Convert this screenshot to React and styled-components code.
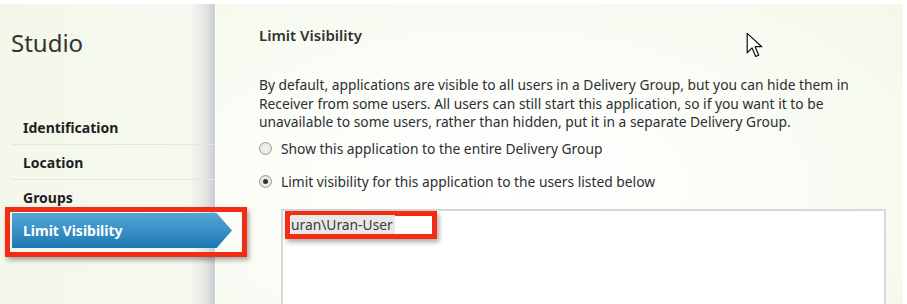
import React from "react";
import styled, { createGlobalStyle } from "styled-components";

const GlobalStyle = createGlobalStyle`
  html, body {
    margin: 0;
    padding: 0;
    width: 907px;
    height: 304px;
    overflow: hidden;
    background: #ffffff;
  }
  * {
    box-sizing: border-box;
  }
`;

const Screen = styled.div`
  position: relative;
  display: grid;
  grid-template-columns: 216px 1fr;
  width: 903px;
  height: 300px;
  margin-top: 4px;
  font-family: "Noto Sans", "Open Sans", sans-serif;
  color: #333333;
  background: radial-gradient(
    ellipse 60% 90% at 55% 60%,
    #ffffff 0%,
    #fbfdf7 45%,
    #f3f8ea 100%
  );
  overflow: hidden;
`;

const Sidebar = styled.div`
  position: relative;
  z-index: 2;
  padding-top: 22px;
  background: linear-gradient(90deg, #f3f8ea 0%, #f6f9f0 88%, #e4e7e4 95%, #c9ced1 100%);
  border-right: 1px solid #ffffff;
`;

const Title = styled.h1`
  margin: 0 0 50px 11px;
  font-size: 24px;
  font-weight: 400;
  color: #333333;
  line-height: 34px;
`;

const NavList = styled.ul`
  list-style: none;
  margin: 0;
  padding: 0;
`;

const NavItem = styled.li`
  height: 35px;
  margin-left: 11px;
  padding-left: 12px;
  display: flex;
  align-items: center;
  font-size: 14px;
  font-weight: 700;
  color: #1e1e24;
  border-bottom: 1px solid ${(p) => (p.$last ? "transparent" : "#e3e7df")};
`;

const Callout = styled.div`
  margin: -8px 0 0 5px;
  width: 242px;
  padding: 1px 10px 4px 2px;
  border: 5px solid #f42c14;
  box-shadow: 2px 3px 5px rgba(0, 0, 0, 0.35);
  background: transparent;
`;

const ActiveTab = styled.div`
  height: 35px;
  width: 220px;
  padding-left: 11px;
  display: flex;
  align-items: center;
  font-size: 14px;
  font-weight: 700;
  color: #ffffff;
  background: linear-gradient(180deg, #52a6d6 0%, #3b93c8 45%, #1c78b2 100%);
  clip-path: polygon(0 0, 93% 0, 100% 50%, 93% 100%, 0 100%);
`;

const Main = styled.div`
  position: relative;
  padding: 21px 0 0 43px;
`;

const Heading = styled.h2`
  margin: 0 0 31px;
  font-size: 15px;
  font-weight: 600;
  color: #333333;
  line-height: 20px;
`;

const Intro = styled.p`
  margin: 0;
  font-size: 13.8px;
  line-height: 18.5px;
  color: #2d2d33;
  width: 640px;
`;

const Option = styled.label`
  display: flex;
  align-items: center;
  gap: 9px;
  height: 33px;
  font-size: 13.8px;
  color: #2d2d33;
`;

const Radio = styled.span`
  width: 13px;
  height: 13px;
  border-radius: 50%;
  border: 1px solid #9a9a9a;
  background: radial-gradient(circle, #f4f4f4 0%, #dedede 100%);
  display: flex;
  align-items: center;
  justify-content: center;
  &::after {
    content: "";
    width: 5px;
    height: 5px;
    border-radius: 50%;
    background: ${(p) => (p.$checked ? "#333333" : "transparent")};
  }
`;

const UserBox = styled.div`
  margin: 11px 0 0 22px;
  width: 605px;
  height: 120px;
  background: #ffffff;
  border: 2px solid #d8d8d8;
  padding: 0 2px;
`;

const Entry = styled.div`
  width: 152px;
  height: 28px;
  border: 5px solid #f42c14;
  box-shadow: 2px 3px 5px rgba(0, 0, 0, 0.35);
  display: flex;
  align-items: center;
  padding-left: 1px;
  font-size: 13.8px;
  color: #3a3a3a;
  span {
    background: #e8e8e8;
    padding-right: 2px;
  }
`;

const Cursor = styled.svg`
  position: absolute;
  left: 530px;
  top: 28px;
`;

export default function App() {
  return (
    <>
      <GlobalStyle />
      <Screen>
        <Sidebar>
          <Title>Studio</Title>
          <NavList>
            <NavItem>Identification</NavItem>
            <NavItem>Location</NavItem>
            <NavItem $last>Groups</NavItem>
          </NavList>
          <Callout>
            <ActiveTab>Limit Visibility</ActiveTab>
          </Callout>
        </Sidebar>
        <Main>
          <Heading>Limit Visibility</Heading>
          <Intro>
            By default, applications are visible to all users in a Delivery Group, but you can hide them in
            <br />
            Receiver from some users. All users can still start this application, so if you want it to be
            <br />
            unavailable to some users, rather than hidden, put it in a separate Delivery Group.
          </Intro>
          <Option>
            <Radio />
            Show this application to the entire Delivery Group
          </Option>
          <Option>
            <Radio $checked />
            Limit visibility for this application to the users listed below
          </Option>
          <UserBox>
            <Entry>
              <span>uran\Uran-User</span>
            </Entry>
          </UserBox>
          <Cursor width="17" height="27" viewBox="0 0 14 22">
            <path
              d="M1 1 L1 17 L5 13 L8 20 L10.5 19 L7.5 12 L13 12 Z"
              fill="#ffffff"
              stroke="#111111"
              strokeWidth="1"
              strokeLinejoin="round"
            />
          </Cursor>
        </Main>
      </Screen>
    </>
  );
}
